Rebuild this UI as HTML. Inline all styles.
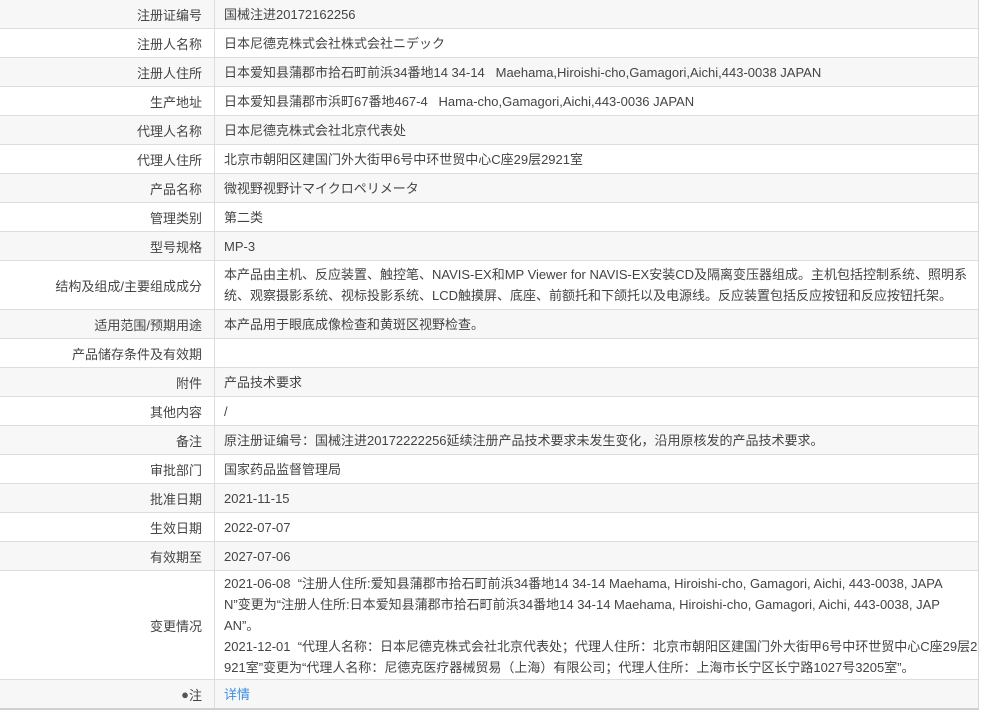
<!DOCTYPE html>
<html><head><meta charset="utf-8"><style>
body{margin:0;background:#fff;width:982px;height:720px;overflow:hidden;font-family:"Liberation Sans","Noto Sans CJK SC",sans-serif;font-size:13px;color:#444}
.t{position:absolute;left:0;top:0;width:978px;border-bottom:2px solid #d0d0d0;border-right:1px solid #d8d8d8}
.r{display:flex;border-top:1px solid #ddd;background:#fff}
.r:nth-child(odd){background:#f7f7f7}
.l{flex:0 0 202px;width:202px;padding-right:12px;text-align:right;border-right:1px solid #ddd;display:flex;align-items:center;justify-content:flex-end;white-space:nowrap}
.v{flex:1;min-width:0;overflow:hidden;padding-left:9px;display:flex;align-items:center;white-space:nowrap;line-height:21px}
.h{height:28px}
a{color:#3a8ee6;text-decoration:none}
</style></head><body>
<div class="t">
<div class="r h" style="border-top:none"><div class="l">注册证编号</div><div class="v">国械注进20172162256</div></div>
<div class="r h"><div class="l">注册人名称</div><div class="v">日本尼德克株式会社株式会社ニデック</div></div>
<div class="r h"><div class="l">注册人住所</div><div class="v">日本爱知县蒲郡市拾石町前浜34番地14 34-14&nbsp;&nbsp;&nbsp;Maehama,Hiroishi-cho,Gamagori,Aichi,443-0038 JAPAN</div></div>
<div class="r h"><div class="l">生产地址</div><div class="v">日本爱知县蒲郡市浜町67番地467-4&nbsp;&nbsp;&nbsp;Hama-cho,Gamagori,Aichi,443-0036 JAPAN</div></div>
<div class="r h"><div class="l">代理人名称</div><div class="v">日本尼德克株式会社北京代表处</div></div>
<div class="r h"><div class="l">代理人住所</div><div class="v">北京市朝阳区建国门外大街甲6号中环世贸中心C座29层2921室</div></div>
<div class="r h"><div class="l">产品名称</div><div class="v">微视野视野计マイクロペリメータ</div></div>
<div class="r h"><div class="l">管理类别</div><div class="v">第二类</div></div>
<div class="r h"><div class="l">型号规格</div><div class="v">MP-3</div></div>
<div class="r" style="height:48px"><div class="l">结构及组成/主要组成成分</div><div class="v">本产品由主机、反应装置、触控笔、NAVIS-EX和MP Viewer for NAVIS-EX安装CD及隔离变压器组成。主机包括控制系统、照明系<br>统、观察摄影系统、视标投影系统、LCD触摸屏、底座、前额托和下颌托以及电源线。反应装置包括反应按钮和反应按钮托架。</div></div>
<div class="r h"><div class="l">适用范围/预期用途</div><div class="v">本产品用于眼底成像检查和黄斑区视野检查。</div></div>
<div class="r h"><div class="l">产品储存条件及有效期</div><div class="v"></div></div>
<div class="r h"><div class="l">附件</div><div class="v">产品技术要求</div></div>
<div class="r h"><div class="l">其他内容</div><div class="v">/</div></div>
<div class="r h"><div class="l">备注</div><div class="v">原注册证编号：国械注进20172222256延续注册产品技术要求未发生变化，沿用原核发的产品技术要求。</div></div>
<div class="r h"><div class="l">审批部门</div><div class="v">国家药品监督管理局</div></div>
<div class="r h"><div class="l">批准日期</div><div class="v">2021-11-15</div></div>
<div class="r h"><div class="l">生效日期</div><div class="v">2022-07-07</div></div>
<div class="r h"><div class="l">有效期至</div><div class="v">2027-07-06</div></div>
<div class="r" style="height:108px"><div class="l">变更情况</div><div class="v">2021-06-08&nbsp;&nbsp;“注册人住所:爱知县蒲郡市拾石町前浜34番地14 34-14 Maehama, Hiroishi-cho, Gamagori, Aichi, 443-0038, JAPA<br>N”变更为“注册人住所:日本爱知县蒲郡市拾石町前浜34番地14 34-14 Maehama, Hiroishi-cho, Gamagori, Aichi, 443-0038, JAP<br>AN”。<br>2021-12-01&nbsp;&nbsp;“代理人名称：日本尼德克株式会社北京代表处；代理人住所：北京市朝阳区建国门外大街甲6号中环世贸中心C座29层2<br>921室”变更为“代理人名称：尼德克医疗器械贸易（上海）有限公司；代理人住所：上海市长宁区长宁路1027号3205室”。</div></div>
<div class="r h"><div class="l"><span style="font-size:13px;color:#555">●</span>注</div><div class="v"><a>详情</a></div></div>
</div>
</body></html>
